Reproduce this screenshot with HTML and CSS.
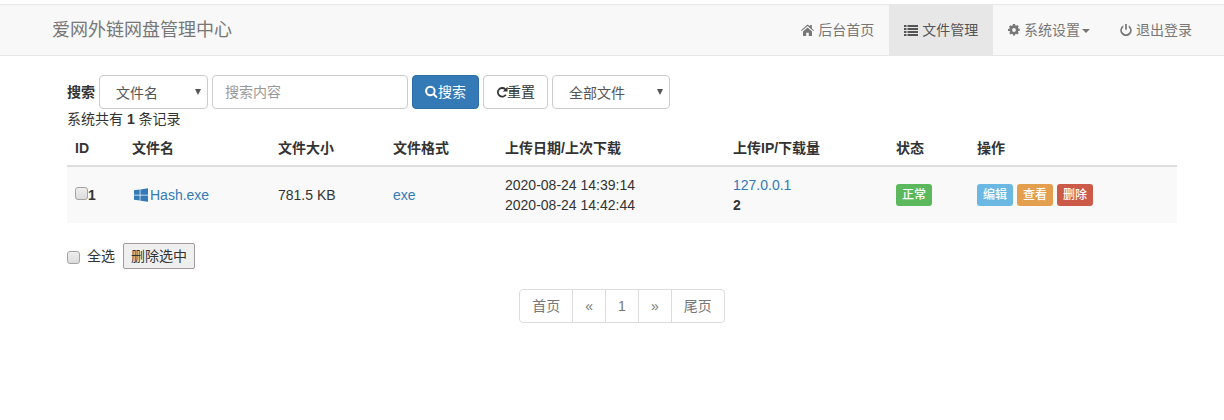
FILE: index.html
```html
<!DOCTYPE html>
<html lang="zh-CN">
<head>
<meta charset="utf-8">
<title>爱网外链网盘管理中心</title>
<link rel="stylesheet" href="styles.css">
</head>
<body>
<nav class="navbar">
  <a class="brand">爱网外链网盘管理中心</a>
  <ul class="nav">
    <li class="nav-item"><svg class="icon w13" viewBox="0 0 13 14"><path d="M6.500 1.600 0 7.300l.7.800L6.500 3.100l5.800 5 .7-.8-2.100-1.800V2H9.100v1.200zM2 8.600V13h3.200V9.800h2.600V13H11V8.600L6.500 4.600z"/></svg> 后台首页</li>
    <li class="nav-item active"><svg class="icon" viewBox="0 0 14 14"><path d="M0 2h2.500v2H0zM3.500 2H14v2H3.500zM0 5h2.500v2H0zM3.500 5H14v2H3.500zM0 8h2.500v2H0zM3.500 8H14v2H3.500zM0 11h2.500v2H0zM3.500 11H14v2H3.500z"/></svg> 文件管理</li>
    <li class="nav-item"><svg class="icon w12" viewBox="0 0 14 14"><path fill-rule="evenodd" d="M5.800 0h2.400l.3 1.700 1 .4 1.400-1 1.700 1.700-1 1.400.4 1 1.700.3v2.400l-1.700.3-.4 1 1 1.400-1.700 1.700-1.400-1-1 .4-.3 1.700H5.800l-.3-1.700-1-.4-1.400 1-1.700-1.700 1-1.400-.4-1L0 8.200V5.800l1.700-.3.4-1-1-1.400 1.700-1.700 1.400 1 1-.4zM7 4.800a2.200 2.200 0 1 0 0 4.400 2.200 2.200 0 0 0 0-4.400z"/></svg> 系统设置<span class="caret"></span></li>
    <li class="nav-item"><svg class="icon w12" viewBox="0 0 14 14"><path d="M6 0h2v6.800H6z"/><path d="M3.800 1.600v2.300a4.600 4.600 0 1 0 6.400 0V1.600a6.700 6.700 0 1 1-6.400 0z"/></svg> 退出登录</li>
  </ul>
</nav>
<main class="container">
  <form class="search">
    <label class="search-label">搜索</label>
    <span class="select-wrap"><select class="control select-field"><option>文件名</option></select></span>
    <input class="control input-field" type="text" placeholder="搜索内容">
    <button class="btn btn-primary" type="button"><svg class="icon w13" viewBox="0 0 14 14"><path fill-rule="evenodd" d="M5.800.3a5.600 5.600 0 0 1 4.600 8.700l3.300 3.300-1.500 1.500-3.300-3.300A5.600 5.600 0 1 1 5.800.3zm0 2.100a3.500 3.500 0 1 0 0 7 3.500 3.500 0 0 0 0-7z"/></svg>搜索</button>
    <button class="btn btn-default" type="button"><svg class="icon w11" viewBox="0 0 14 14"><path d="M11.500 2.900 13.500.9v5.600H8l2-2A4 4 0 1 0 10.600 9.500l1.800 1.100A6.100 6.100 0 1 1 11.500 2.900z"/></svg>重置</button>
    <span class="select-wrap"><select class="control select-type"><option>全部文件</option></select></span>
  </form>
  <p class="summary">系统共有 <b>1</b> 条记录</p>
  <table class="table">
    <colgroup>
      <col class="c-id"><col class="c-name"><col class="c-size"><col class="c-format"><col class="c-date"><col class="c-ip"><col class="c-status"><col class="c-action">
    </colgroup>
    <thead>
      <tr><th>ID</th><th>文件名</th><th>文件大小</th><th>文件格式</th><th>上传日期/上次下载</th><th>上传IP/下载量</th><th>状态</th><th>操作</th></tr>
    </thead>
    <tbody>
      <tr>
        <td><input class="check row-check" type="checkbox"><b>1</b></td>
        <td><a class="link"><svg class="win" viewBox="0 0 14 14"><path d="M0 2.300 5.700 1.500V6.700H0zM6.400 1.400 14 .3V6.700H6.400zM0 7.400H5.700V12.600L0 11.800zM6.400 7.400H14V13.800L6.400 12.700z"/></svg>Hash.exe</a></td>
        <td>781.5 KB</td>
        <td><a class="link">exe</a></td>
        <td>2020-08-24 14:39:14<br>2020-08-24 14:42:44</td>
        <td><a class="link">127.0.0.1</a><br><b>2</b></td>
        <td><span class="badge green">正常</span></td>
        <td><div class="actions"><span class="badge blue">编辑</span><span class="badge orange">查看</span><span class="badge red">删除</span></div></td>
      </tr>
    </tbody>
  </table>
  <div class="bulk">
    <input class="check bulk-check" type="checkbox">
    <span class="bulk-label">全选</span>
    <button class="bulk-btn" type="button">删除选中</button>
  </div>
  <div class="pager-wrap">
    <ul class="pager">
      <li>首页</li><li>«</li><li>1</li><li>»</li><li>尾页</li>
    </ul>
  </div>
</main>
</body>
</html>
```
FILE: styles.css
```css
* { box-sizing: border-box; }
html, body { margin: 0; padding: 0; }
body {
  background: #fff;
  color: #333;
  font: 14px/20px "Liberation Sans", "Noto Sans CJK SC", sans-serif;
}
.navbar {
  margin-top: 4px;
  height: 52px;
  display: flex;
  justify-content: space-between;
  align-items: stretch;
  background: #f8f8f8;
  border-top: 1px solid #e7e7e7;
  border-bottom: 1px solid #e7e7e7;
  padding: 0 17px 0 52px;
}
.brand { font-size: 18px; line-height: 50px; color: #777; }
.nav { display: flex; list-style: none; margin: 0; padding: 0; }
.nav-item { padding: 15px; color: #777; white-space: nowrap; }
.nav-item.active { background: #e7e7e7; color: #555; }
.icon { width: 14px; height: 14px; fill: currentColor; vertical-align: -2px; }
.w13 { width: 13px; }
.w12 { width: 12px; height: 12px; vertical-align: -1px; }
.w11 { width: 12px; height: 12px; margin-right: -1px; vertical-align: -1px; }
.caret {
  display: inline-block;
  margin-left: 2px;
  vertical-align: middle;
  border-top: 4px solid;
  border-left: 4px solid transparent;
  border-right: 4px solid transparent;
}
.container { padding: 19px 47px 0 67px; }
.search { display: flex; align-items: center; gap: 4px; height: 34px; }
.search-label { font-weight: 700; }
.control {
  height: 34px;
  font: inherit;
  color: #555;
  background: #fff;
  border: 1px solid #ccc;
  border-radius: 4px;
  padding: 6px 12px;
}
.select-wrap { position: relative; display: block; height: 34px; }
.select-wrap::after {
  content: "";
  position: absolute;
  right: 7px;
  top: 14px;
  border-top: 6px solid #555;
  border-left: 3px solid transparent;
  border-right: 3px solid transparent;
  pointer-events: none;
}
select.control { appearance: none; padding: 7px 12px 5px 16px; display: block; }
.select-field { width: 109px; }
.select-type { width: 118px; }
.input-field { width: 196px; }
.input-field::placeholder { color: #999; }
.btn {
  height: 34px;
  font: inherit;
  padding: 6px 12px;
  border: 1px solid #ccc;
  border-radius: 4px;
  white-space: nowrap;
}
.btn-primary { background: #337ab7; border-color: #2e6da4; color: #fff; }
.btn-default { background: #fff; color: #333; }
.summary { margin: 0; height: 20px; }
.table { width: 1110px; table-layout: fixed; border-collapse: collapse; }
.c-id { width: 57px; }
.c-name { width: 146px; }
.c-size { width: 115px; }
.c-format { width: 112px; }
.c-date { width: 228px; }
.c-ip { width: 163px; }
.c-status { width: 81px; }
.c-action { width: 208px; }
th {
  text-align: left;
  padding: 8px 8px 7px;
  height: 37px;
  border-bottom: 2px solid #ddd;
  white-space: nowrap;
}
td { background: #f9f9f9; padding: 8px; height: 56px; vertical-align: middle; white-space: nowrap; }
.link { color: #337ab7; }
.win { width: 14px; height: 14px; fill: #337ab7; vertical-align: -2px; margin: 0 2px; }
.check {
  appearance: none;
  width: 13px;
  height: 13px;
  margin: 0;
  border: 1px solid #a3a3a3;
  border-radius: 3px;
  background: linear-gradient(#eee, #dcdcdc);
}
.row-check { vertical-align: 0; }
.bulk-check { margin-top: 2px; }
.badge {
  display: inline-block;
  width: 36px;
  height: 22px;
  border-radius: 3px;
  color: #fff;
  font-size: 12px;
  font-weight: 500;
  line-height: 22px;
  text-align: center;
}
.actions { display: flex; gap: 4px; }
.green { background: #5cb85c; }
.blue { background: #6bb9e2; }
.orange { background: #e39f4e; }
.red { background: #cb5a48; }
.bulk { display: flex; align-items: center; margin-top: 20px; height: 26px; }
.bulk-label { margin-left: 7px; }
.bulk-btn {
  margin-left: 8px;
  width: 72px;
  height: 26px;
  padding: 0;
  font: inherit;
  color: #333;
  background: #efefef;
  border: 1px solid #a59a9a;
  border-radius: 2px;
}
.pager-wrap { display: flex; justify-content: center; margin-top: 20px; }
.pager {
  display: flex;
  list-style: none;
  margin: 0;
  padding: 0;
  height: 34px;
  background: #fff;
  border: 1px solid #ddd;
  border-radius: 4px;
  color: #777;
}
.pager li { padding: 6px 12px; border-left: 1px solid #ddd; }
.pager li:first-child { border-left: 0; }
```
